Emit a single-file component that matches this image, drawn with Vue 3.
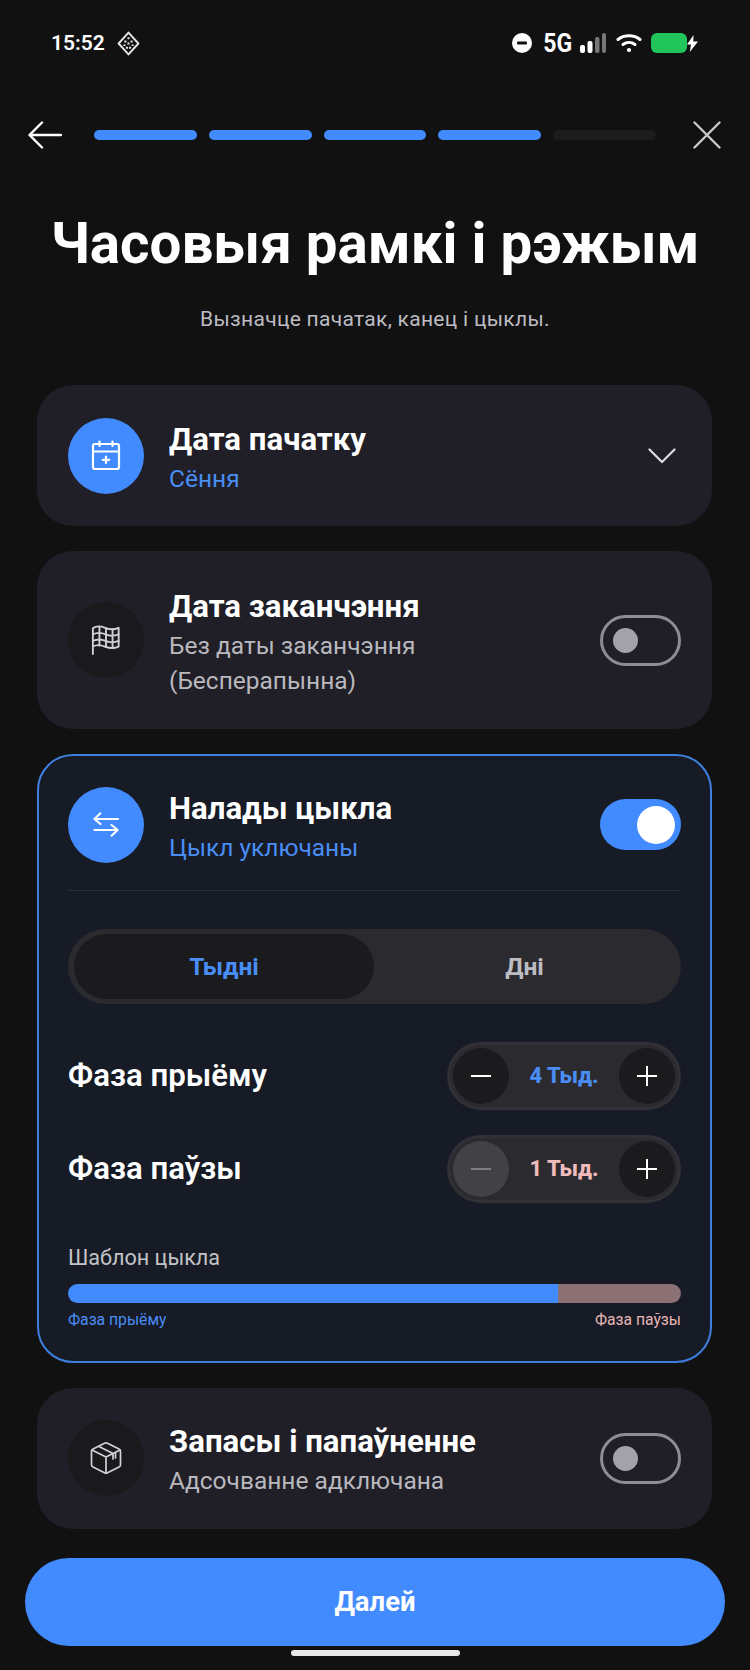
<script setup>
const segments = [true, true, true, true, false]
</script>

<template>
  <div class="page">
    <div class="status">
      <div class="status-left">
        <span class="time">15:52</span>
        <svg class="diamond" width="23" height="25" viewBox="0 0 22 24" fill="none">
          <path d="M11 1.500 20.500 12 11 22.500 1.500 12Z" stroke="#e6e6e6" stroke-width="1.800" stroke-linejoin="round" />
          <path d="M11 6v2M8 9v2M14 9v2M11 11v2M7 13v1.500M15 13v1.500M9.500 15v2M12.500 15v2" stroke="#e6e6e6" stroke-width="2" />
        </svg>
      </div>
      <div class="status-right">
        <svg width="20" height="20" viewBox="0 0 20 20"><circle cx="10" cy="10" r="10" fill="#fff" /><rect x="5" y="8.500" width="10" height="3" rx="1" fill="#111112" /></svg>
        <span class="net">5G</span>
        <svg width="27" height="20" viewBox="0 0 27 20">
          <rect x="0" y="12" width="5" height="8" rx="2" fill="#fff" />
          <rect x="7.500" y="8" width="5" height="12" rx="2" fill="#fff" />
          <rect x="15" y="4" width="4.500" height="16" rx="2" fill="#77777a" />
          <rect x="22" y="0" width="4" height="20" rx="2" fill="#77777a" />
        </svg>
        <svg class="wifi" width="26" height="20" viewBox="0 0 26 20" fill="none" stroke="#fff" stroke-width="3" stroke-linecap="round">
          <path d="M2 6.500C8 1.500 18 1.500 24 6.500" />
          <path d="M7 11.500C10.500 8.800 15.500 8.800 19 11.500" />
          <circle cx="13" cy="17" r="1.200" fill="#fff" stroke-width="1.800" />
        </svg>
        <div class="battery-wrap">
          <div class="battery"></div>
          <svg width="11" height="17" viewBox="0 0 11 17"><path d="M6.500 0 0 9.500h4L2.800 17 11 6.500H6.300Z" fill="#fff" /></svg>
        </div>
      </div>
    </div>

    <div class="topbar">
      <svg width="34" height="28" viewBox="0 0 34 28" fill="none" stroke="#fff" stroke-width="2.400" stroke-linecap="round" stroke-linejoin="round">
        <path d="M33 14H2M14 1.500 1.500 14 14 26.500" />
      </svg>
      <div class="progress">
        <span v-for="(on, i) in segments" :key="i" class="seg" :class="{ on }"></span>
      </div>
      <svg width="28" height="28" viewBox="0 0 28 28" fill="none" stroke="#c9c9cc" stroke-width="2.400" stroke-linecap="round">
        <path d="M1.500 1.500 26.500 26.500M26.500 1.500 1.500 26.500" />
      </svg>
    </div>

    <h1 class="title">Часовыя рамкі і рэжым</h1>
    <p class="lead">Вызначце пачатак, канец і цыклы.</p>

    <div class="cards">
      <section class="card c1">
        <div class="row">
          <div class="icon blue">
            <svg width="30" height="31" viewBox="0 0 30 31" fill="none" stroke="#fff" stroke-width="2.200" stroke-linecap="round" stroke-linejoin="round">
              <rect x="2" y="4" width="26" height="25" rx="2" />
              <path d="M2 11.500H28M8.500 1.500V6M21.500 1.500V6M15 16.500V23M11.700 19.800H18.300" />
            </svg>
          </div>
          <div class="text">
            <div class="t">Дата пачатку</div>
            <div class="s accent">Сёння</div>
          </div>
          <svg class="chev" width="28" height="16" viewBox="0 0 28 16" fill="none" stroke="#dcdce0" stroke-width="2.200" stroke-linecap="round" stroke-linejoin="round">
            <path d="M1.500 1.500 14 14 26.500 1.500" />
          </svg>
        </div>
      </section>

      <section class="card c2">
        <div class="row">
          <div class="icon dark">
            <svg width="30" height="30" viewBox="0 0 32 32" fill="none" stroke="#d2d2d6" stroke-width="2" stroke-linecap="round" stroke-linejoin="round">
              <path d="M2 31V3.500C6 .5 10 1 15 3s9 2.500 14.500 0V23c-5.500 2.500-9.500 2-14.500 0s-9-2.500-13 0" />
              <path d="M9 2v20M16 3.500v20M23 4.500v20M2 10c4-2 9-2 13.500 0s9 2 14 0M2 17c4-2 9-2 13.500 0s9 2 14 0" />
            </svg>
          </div>
          <div class="text">
            <div class="t">Дата заканчэння</div>
            <div class="s">Без даты заканчэння<br />(Бесперапынна)</div>
          </div>
          <div class="toggle"><span class="knob"></span></div>
        </div>
      </section>

      <section class="card c3">
        <div class="row">
          <div class="icon blue">
            <svg width="26" height="25" viewBox="0 0 28 26" fill="none" stroke="#fff" stroke-width="2.200" stroke-linecap="round" stroke-linejoin="round">
              <path d="M27 7H1.500M8 1 1.500 7 8 12.500M1.500 19H26.500M20 13.500 26.500 19 20 25" />
            </svg>
          </div>
          <div class="text">
            <div class="t">Налады цыкла</div>
            <div class="s accent">Цыкл уключаны</div>
          </div>
          <div class="toggle on"><span class="knob"></span></div>
        </div>

        <div class="divider"></div>

        <div class="tabs">
          <div class="tab active">Тыдні</div>
          <div class="tab">Дні</div>
        </div>

        <div class="phase first">
          <span class="phase-name">Фаза прыёму</span>
          <div class="stepper">
            <span class="step"><svg width="20" height="20" viewBox="0 0 20 20" stroke="#fff" stroke-width="2"><path d="M0 10H20" /></svg></span>
            <span class="val accent">4 Тыд.</span>
            <span class="step"><svg width="20" height="20" viewBox="0 0 20 20" stroke="#fff" stroke-width="2"><path d="M0 10H20M10 0V20" /></svg></span>
          </div>
        </div>
        <div class="phase second">
          <span class="phase-name">Фаза паўзы</span>
          <div class="stepper">
            <span class="step off"><svg width="20" height="20" viewBox="0 0 20 20" stroke="#807f84" stroke-width="2"><path d="M0 10H20" /></svg></span>
            <span class="val pink">1 Тыд.</span>
            <span class="step"><svg width="20" height="20" viewBox="0 0 20 20" stroke="#fff" stroke-width="2"><path d="M0 10H20M10 0V20" /></svg></span>
          </div>
        </div>

        <div class="pattern-label">Шаблон цыкла</div>
        <div class="bar"><span class="bar-a"></span><span class="bar-b"></span></div>
        <div class="legend">
          <span class="accent">Фаза прыёму</span>
          <span class="pink-soft">Фаза паўзы</span>
        </div>
      </section>

      <section class="card c4">
        <div class="row">
          <div class="icon dark">
            <svg width="32" height="34" viewBox="0 0 32 34" fill="none" stroke="#d2d2d6" stroke-width="1.700" stroke-linecap="round" stroke-linejoin="round">
              <path d="M14.500 2.200a3 3 0 0 1 3 0L29 8a2.500 2.500 0 0 1 1.500 2.300V23.700A2.500 2.500 0 0 1 29 26L17.500 31.800a3 3 0 0 1-3 0L3 26a2.500 2.500 0 0 1-1.500-2.300V10.300A2.500 2.500 0 0 1 3 8Z" />
              <path d="M2 9 16 16 30 9M16 16V32M9 5.500 23 12.500V18M25.500 11.300V17" />
            </svg>
          </div>
          <div class="text">
            <div class="t">Запасы і папаўненне</div>
            <div class="s">Адсочванне адключана</div>
          </div>
          <div class="toggle"><span class="knob"></span></div>
        </div>
      </section>
    </div>

    <button class="next">Далей</button>
    <div class="home"></div>
  </div>
</template>

<style scoped>
.page {
  width: 750px;
  height: 1670px;
  overflow: hidden;
  background: #111112;
  font-family: Roboto, "Noto Sans", sans-serif;
  color: #fff;
}
.status {
  height: 34px;
  padding: 26px 52px 0 51px;
  display: flex;
  justify-content: space-between;
  align-items: center;
}
.status-left, .status-right { display: flex; align-items: center; }
.time { font-size: 21px; font-weight: 600; width: 66px; }
.status-right { gap: 7px; }
.net { font-size: 25px; font-weight: 700; margin-left: 3px; transform: scaleX(.92); }
.wifi { margin-left: 2px; }
.battery-wrap { display: flex; align-items: center; margin-left: 2px; }
.battery { width: 36px; height: 20px; border-radius: 6px; background: #22c55a; }

.topbar {
  margin-top: 61px;
  height: 28px;
  padding: 0 29px 0 28px;
  display: flex;
  align-items: center;
  gap: 32px;
}
.topbar > svg:last-child { margin-left: 5px; }
.progress { flex: 1; display: flex; gap: 12px; }
.seg { flex: 1; height: 10px; border-radius: 5px; background: #1c1c1e; }
.seg.on { background: #428bff; }

.title {
  margin: 63px 0 0;
  text-align: center;
  font-size: 56.5px;
  line-height: 64px;
  font-weight: 700;
}
.lead {
  margin: 28px 0 0;
  text-align: center;
  font-size: 21px;
  line-height: 30px;
  letter-spacing: .3px;
  color: #bdbcc2;
}
.cards {
  margin: 51px 38px 0 37px;
  display: flex;
  flex-direction: column;
  gap: 25px;
}
.card { background: #201f27; border-radius: 36px; padding: 0 31px; }
.c1 { padding-top: 30.5px; padding-bottom: 30.5px; }
.c2 { padding-top: 31.5px; padding-bottom: 31.5px; }
.c4 { padding-top: 30.5px; padding-bottom: 30.5px; }
.c3 {
  background: #161b25;
  border: 2px solid #3f7fe0;
  padding: 28.5px 29px 30px;
}
.row { display: flex; align-items: center; gap: 25px; }
.icon {
  width: 76px;
  height: 76px;
  flex: none;
  border-radius: 50%;
  display: flex;
  align-items: center;
  justify-content: center;
}
.icon.blue { background: #428bff; }
.icon.dark { background: #1a1a1c; }
.text { flex: 1; min-width: 0; padding-top: 3px; }
.t { font-size: 31.2px; line-height: 42px; font-weight: 700; }
.s { font-size: 24.5px; line-height: 35px; color: #b9b8be; }
.accent { color: #4a8df5; }
.chev { margin-right: 5px; }
.toggle {
  width: 81px;
  height: 51px;
  box-sizing: border-box;
  flex: none;
  border: 3px solid #8e8d93;
  border-radius: 26px;
  padding-left: 10px;
  display: flex;
  align-items: center;
}
.knob { width: 25px; height: 25px; border-radius: 50%; background: #a3a2aa; }
.toggle.on { background: #428bff; border: 0; padding-left: 37px; }
.toggle.on .knob { width: 38px; height: 38px; background: #fff; }

.divider { height: 1px; background: #252e3d; margin-top: 25px; }
.tabs {
  margin-top: 38px;
  height: 75px;
  box-sizing: border-box;
  padding: 5px 6px;
  border-radius: 38px;
  background: #2b2a2f;
  display: grid;
  grid-template-columns: 300px 1fr;
}
.tab {
  display: flex;
  align-items: center;
  justify-content: center;
  font-size: 24.5px;
  font-weight: 700;
  color: #bdbcc2;
}
.tab.active { background: #1b1b1d; border-radius: 33px; color: #4a8df5; }

.phase { display: flex; align-items: center; justify-content: space-between; }
.phase.first { margin-top: 38px; }
.phase.second { margin-top: 25px; }
.phase-name { font-size: 31.2px; font-weight: 600; }
.stepper {
  width: 234px;
  height: 68px;
  box-sizing: border-box;
  padding: 3px;
  border: 3px solid #303036;
  border-radius: 34px;
  background: #2b2a2f;
  display: flex;
  align-items: center;
  justify-content: space-between;
}
.step {
  width: 56px;
  height: 56px;
  border-radius: 50%;
  background: #1b1b1d;
  display: flex;
  align-items: center;
  justify-content: center;
}
.step.off { background: #424146; }
.val { font-size: 22px; font-weight: 800; }
.pink { color: #f2bcbc; }
.pink-soft { color: #e6b4b4; }

.pattern-label { margin-top: 40px; font-size: 21.6px; line-height: 30px; color: #c4c3c8; }
.bar { margin-top: 11px; height: 19px; border-radius: 10px; overflow: hidden; display: flex; }
.bar-a { width: 80%; background: #428bff; }
.bar-b { flex: 1; background: #8b7074; }
.legend {
  margin-top: 6px;
  display: flex;
  justify-content: space-between;
  font-size: 15.7px;
  line-height: 22px;
}
.next {
  display: block;
  width: 700px;
  height: 88px;
  margin: 29px 0 0 25px;
  border: 0;
  border-radius: 44px;
  background: #428bff;
  color: #fff;
  font-family: inherit;
  font-size: 27.5px;
  font-weight: 700;
}
.home { width: 169px; height: 6px; margin: 4px auto 0; border-radius: 3px; background: #e8e8e8; }
</style>

<style>
html, body { background: #111112; }
</style>
